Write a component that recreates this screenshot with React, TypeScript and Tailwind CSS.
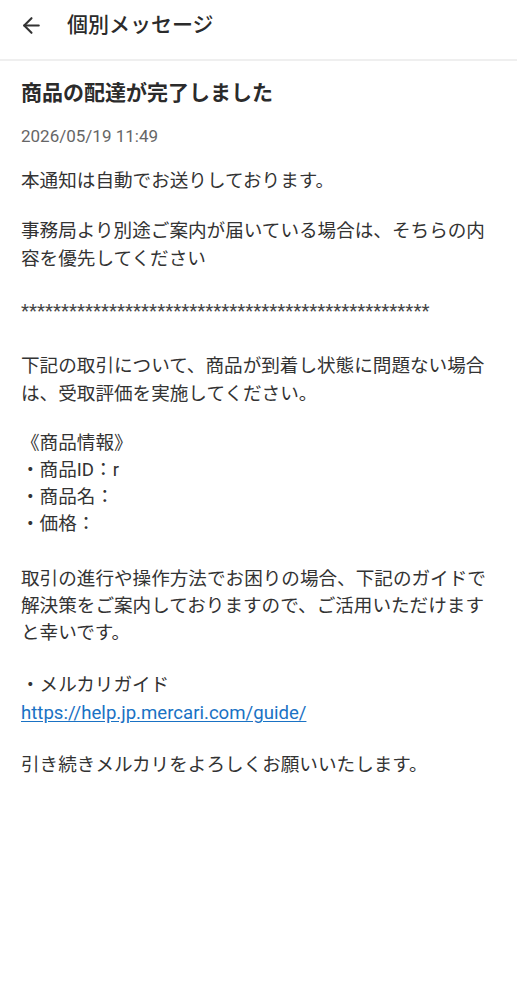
import { ArrowLeft } from "lucide-react";

const FONT = { fontFamily: 'Roboto, "Noto Sans CJK JP", sans-serif' };

export default function App() {
  return (
    <div className="min-h-screen w-full bg-white text-[#333333]" style={FONT}>
      {/* app bar */}
      <header className="flex h-[61px] items-center border-b-2 border-[#efefef] px-[19px] pb-[8px]">
        <ArrowLeft className="h-[25px] w-[25px] text-[#333333]" strokeWidth={2} />
        <h1 className="ml-[23px] text-[21px] font-medium leading-none text-[#2b2b2b]">個別メッセージ</h1>
      </header>

      <main className="px-[21px]">
        <h2 className="mt-[18px] text-[21px] font-bold leading-[28px] text-[#2b2b2b]">商品の配達が完了しました</h2>
        <p className="mt-[18px] text-[17px] leading-[22px] text-[#666666]">2026/05/19 11:49</p>

        <div className="text-[18.6px] leading-[28px]">
          <p className="mt-[20px]">本通知は自動でお送りしております。</p>
          <p className="mt-[22px]">
            事務局より別途ご案内が届いている場合は、そちらの内
            <br />
            容を優先してください
          </p>
          <p className="mt-[24px] text-[#444444]">{"*".repeat(51)}</p>
          <p className="mt-[27px]">
            下記の取引について、商品が到着し状態に問題ない場合
            <br />
            は、受取評価を実施してください。
          </p>
          <div className="mt-[22px] leading-[27px]">
            <p>《商品情報》</p>
            <p>・商品ID：r</p>
            <p>・商品名：</p>
            <p>・価格：</p>
          </div>
          <p className="mt-[28px] leading-[27px]">
            取引の進行や操作方法でお困りの場合、下記のガイドで
            <br />
            解決策をご案内しておりますので、ご活用いただけます
            <br />
            と幸いです。
          </p>
          <div className="mt-[24px]">
            <p>・メルカリガイド</p>
            <a href="#" className="text-[#1a72c4] underline underline-offset-2">
              https://help.jp.mercari.com/guide/
            </a>
          </div>
          <p className="mt-[24px]">引き続きメルカリをよろしくお願いいたします。</p>
        </div>
      </main>
    </div>
  );
}
